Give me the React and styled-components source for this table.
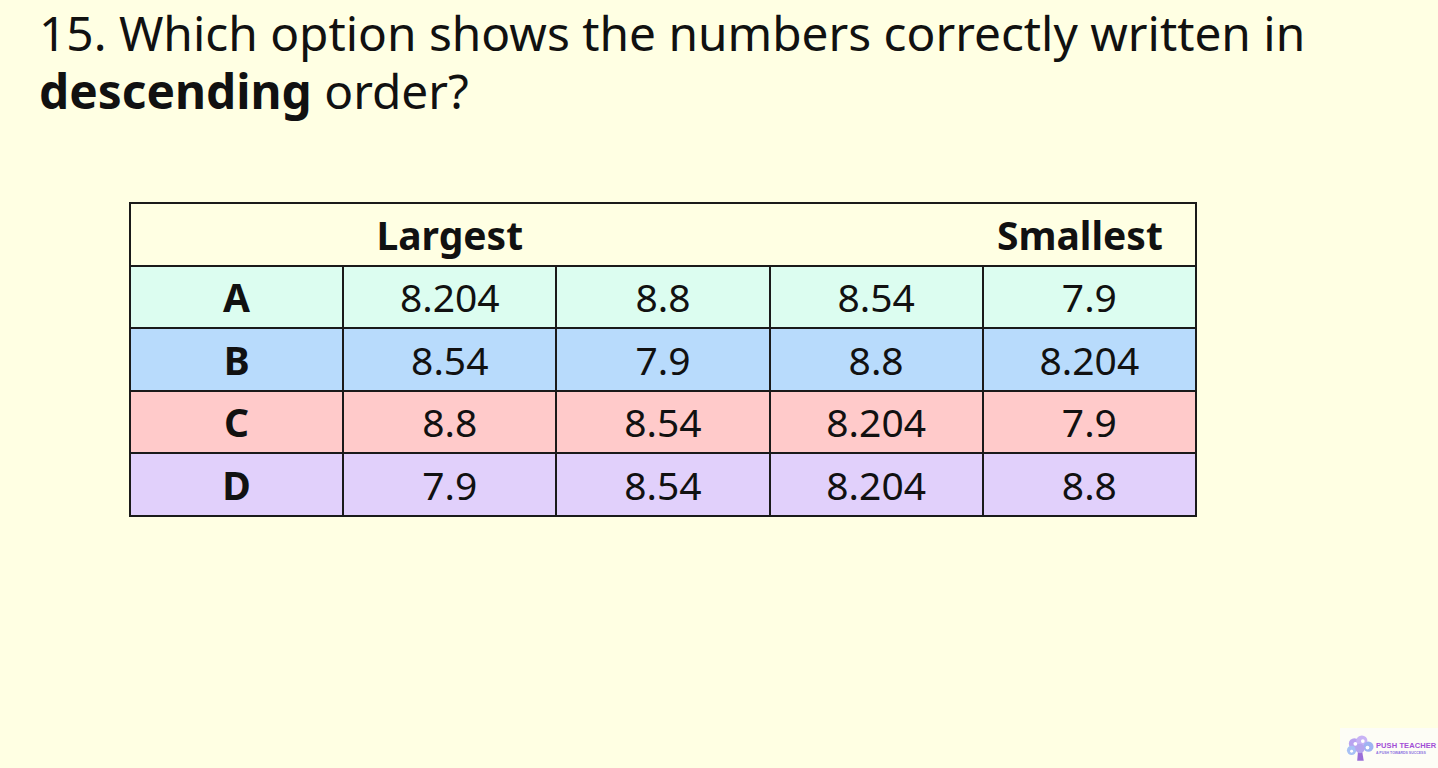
import React from 'react'
import styled, { createGlobalStyle } from 'styled-components'

const GlobalStyle = createGlobalStyle`
  html, body {
    margin: 0;
    padding: 0;
    background: #ffffe3;
  }
  body {
    font-family: "Noto Sans", "Open Sans", sans-serif;
    color: #111;
  }
`

const Page = styled.div`
  position: relative;
  width: 1438px;
  height: 768px;
  box-sizing: border-box;
  padding: 4px 0 0 39px;
  overflow: hidden;
`

const Question = styled.h1`
  margin: 0;
  font-size: 47.8px;
  font-weight: 400;
  line-height: 58px;
  color: #111;
`

const TableWrap = styled.div`
  margin: 82px 0 0 90px;
`

const Grid = styled.table`
  border-collapse: collapse;
  table-layout: fixed;
  width: 1068px;
  border: 2px solid #1a1a1a;
`

const Row = styled.tr`
  background: ${p => p.bg};
  height: 62.5px;
`

const HeadCell = styled.td`
  font-size: 39px;
  font-weight: 700;
  text-align: center;
  padding: 0 ${p => p.pr || 0}px 0 0;
  line-height: 1;
`

const Cell = styled.td`
  border: 2px solid #1a1a1a;
  font-size: 39px;
  font-weight: ${p => (p.bold ? 700 : 400)};
  text-align: center;
  padding: 0;
  line-height: 1;
`

const Logo = styled.div`
  position: absolute;
  right: 0;
  bottom: 0;
  width: 98px;
  height: 40px;
  background: #fdfdf6;
  display: flex;
  align-items: center;
  gap: 2px;
  padding-left: 6px;
  box-sizing: border-box;
`

const LogoText = styled.div`
  display: flex;
  flex-direction: column;
  gap: 1px;
  font-family: "Liberation Sans", Arial, sans-serif;
  color: #a24fd6;
`

const LogoTitle = styled.span`
  font-size: 7.5px;
  font-weight: 700;
  letter-spacing: 0.1px;
`

const LogoSub = styled.span`
  font-size: 3.5px;
  font-weight: 700;
  color: #8a6fe0;
`

const rows = [
  { label: 'A', bg: '#dcfdf0', vals: ['8.204', '8.8', '8.54', '7.9'] },
  { label: 'B', bg: '#b8dbfc', vals: ['8.54', '7.9', '8.8', '8.204'] },
  { label: 'C', bg: '#ffcaca', vals: ['8.8', '8.54', '8.204', '7.9'] },
  { label: 'D', bg: '#e1d0fb', vals: ['7.9', '8.54', '8.204', '8.8'] }
]

// little tree from the Push Teacher mark
function Tree() {
  return (
    <svg width="28" height="27" viewBox="0 0 30 28">
      <path d="M13 15 L12 27 L19 27 L17 15 Z" fill="#9b6fd8" />
      <circle cx="9" cy="9" r="6" fill="#b9a3f0" />
      <circle cx="17" cy="6" r="6" fill="#c8b3f5" />
      <circle cx="24" cy="12" r="5.5" fill="#9fb4f2" />
      <circle cx="6" cy="16" r="5" fill="#a7c1f5" />
      <circle cx="15" cy="14" r="5" fill="#b6a5ee" />
      <circle cx="10" cy="9" r="2" fill="#fff" />
      <circle cx="18" cy="6" r="2" fill="#fff" />
      <circle cx="23" cy="13" r="2" fill="#fff" />
      <circle cx="6" cy="17" r="1.6" fill="#fff" />
    </svg>
  )
}

export default function App() {
  return (
    <Page>
      <GlobalStyle />
      <Question>
        15. Which option shows the numbers correctly written in
        <br />
        <b>descending</b> order?
      </Question>
      <TableWrap>
        <Grid>
          <tbody>
            <Row bg="transparent">
              <HeadCell />
              <HeadCell>Largest</HeadCell>
              <HeadCell />
              <HeadCell />
              <HeadCell pr={18}>Smallest</HeadCell>
            </Row>
            {rows.map(r => (
              <Row bg={r.bg} key={r.label}>
                <Cell bold>{r.label}</Cell>
                {r.vals.map((v, i) => (
                  <Cell key={i}>{v}</Cell>
                ))}
              </Row>
            ))}
          </tbody>
        </Grid>
      </TableWrap>
      <Logo>
        <Tree />
        <LogoText>
          <LogoTitle>PUSH TEACHER</LogoTitle>
          <LogoSub>A PUSH TOWARDS SUCCESS</LogoSub>
        </LogoText>
      </Logo>
    </Page>
  )
}
